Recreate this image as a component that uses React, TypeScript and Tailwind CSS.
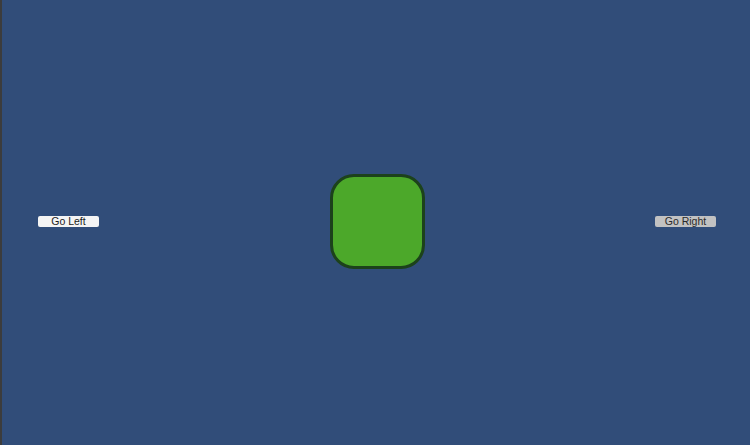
export default function App() {
  return (
    <div className="flex h-[445px] w-[750px] overflow-hidden bg-[#314d79] font-['Liberation_Sans',Arial,sans-serif]">
      <div className="w-[2px] shrink-0 bg-[#3c3c3c]" />
      <div className="flex flex-1 items-center justify-between pb-[3px] pl-[36px] pr-[34px]">
        <button className="flex h-[11px] w-[61px] items-center justify-center rounded-[2px] bg-[#f4f4f4] text-[10.5px] leading-none text-[#1c1c1c]">
          Go Left
        </button>
        <div className="h-[95px] w-[95px] rounded-[24px] border-[3px] border-[#1c421b] bg-[#4ca82a]" />
        <button className="flex h-[11px] w-[61px] items-center justify-center rounded-[2px] bg-[#c2c2c2] text-[10.5px] leading-none text-[#2a2a2a]">
          Go Right
        </button>
      </div>
    </div>
  );
}
